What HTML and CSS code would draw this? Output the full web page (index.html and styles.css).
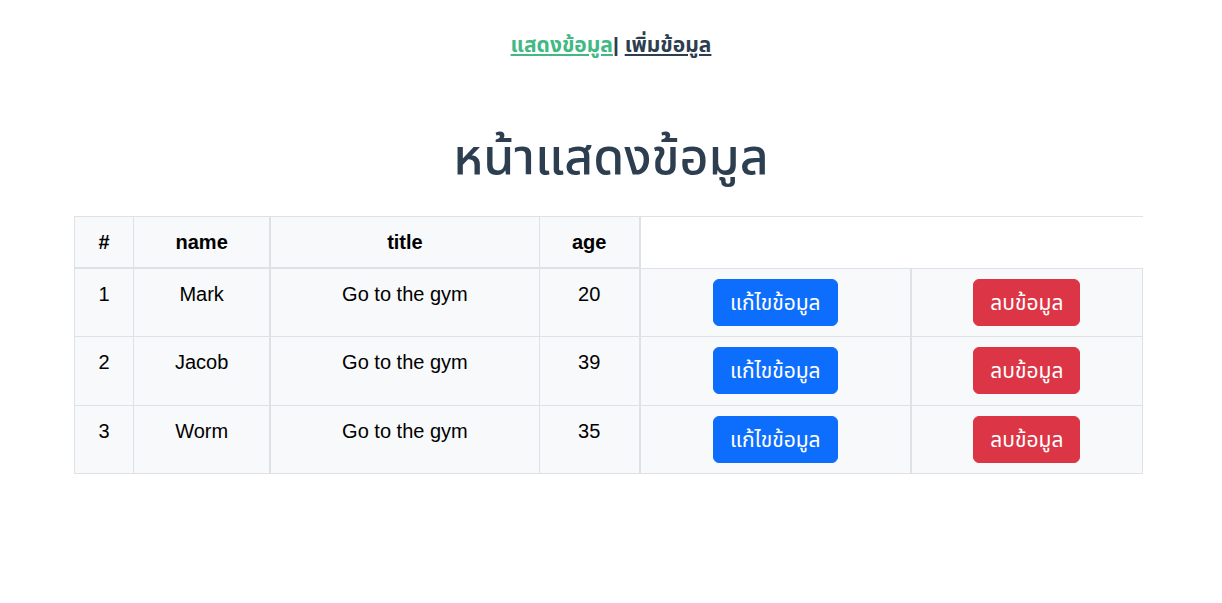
FILE: index.html
```html
<!DOCTYPE html>
<html lang="th">
<head>
<meta charset="utf-8">
<title>หน้าแสดงข้อมูล</title>
<link rel="stylesheet" href="styles.css">
</head>
<body>
<div class="app">
  <nav class="nav">
    <a href="#" class="link active">แสดงข้อมูล</a>| <a href="#" class="link">เพิ่มข้อมูล</a>
  </nav>
  <h1 class="title">หน้าแสดงข้อมูล</h1>
  <table class="data-table">
    <thead>
      <tr>
        <th class="c-num">#</th>
        <th class="c-name">name</th>
        <th class="c-title">title</th>
        <th class="c-age">age</th>
      </tr>
    </thead>
    <tbody>
      <tr>
        <td class="c-num">1</td>
        <td class="c-name">Mark</td>
        <td class="c-title">Go to the gym</td>
        <td class="c-age">20</td>
        <td class="c-edit"><button class="btn btn-edit">แก้ไขข้อมูล</button></td>
        <td class="c-del"><button class="btn btn-del">ลบข้อมูล</button></td>
      </tr>
      <tr>
        <td class="c-num">2</td>
        <td class="c-name">Jacob</td>
        <td class="c-title">Go to the gym</td>
        <td class="c-age">39</td>
        <td class="c-edit"><button class="btn btn-edit">แก้ไขข้อมูล</button></td>
        <td class="c-del"><button class="btn btn-del">ลบข้อมูล</button></td>
      </tr>
      <tr>
        <td class="c-num">3</td>
        <td class="c-name">Worm</td>
        <td class="c-title">Go to the gym</td>
        <td class="c-age">35</td>
        <td class="c-edit"><button class="btn btn-edit">แก้ไขข้อมูล</button></td>
        <td class="c-del"><button class="btn btn-del">ลบข้อมูล</button></td>
      </tr>
    </tbody>
  </table>
</div>
</body>
</html>
```
FILE: styles.css
```css
* { box-sizing: border-box; }
body {
  margin: 0;
  background: #fff;
  font-family: "Liberation Sans", Arial, "Noto Sans Thai", "Noto Sans", sans-serif;
  color: #212529;
}
.app {
  text-align: center;
  color: #2c3e50;
}
.nav {
  padding: 30px;
  font-size: 21px;
  line-height: 30px;
  font-weight: bold;
}
.link { color: #2c3e50; }
.link.active { color: #42b983; }
.title {
  margin: 38px 0 30px;
  font-size: 50px;
  line-height: 58px;
  font-weight: 500;
}
.data-table {
  width: 1069px;
  margin-left: 74px;
  border-collapse: collapse;
  font-size: 20px;
  line-height: 30px;
  color: #000;
}
.data-table thead tr { border-top: 1px solid #dee2e6; }
.data-table th {
  background: #f8f9fa;
  border: 1px solid #dee2e6;
  border-top: 0;
  border-bottom: 2px solid #dee2e6;
  padding: 10px 8px;
  font-weight: bold;
  vertical-align: middle;
}
.data-table td {
  background: #f8f9fa;
  border: 1px solid #dee2e6;
  padding: 10px 8px 10.5px;
  vertical-align: top;
}
.c-num { width: 59px; }
.c-name { width: 137px; }
.c-title { width: 269px; border-left-width: 2px !important; }
.c-age { width: 101px; }
.data-table th.c-age { border-right-width: 2px; }
.c-edit { width: 271px; border-left-width: 2px !important; }
.c-del { width: 232px; border-left-width: 2px !important; }
.btn {
  font-family: inherit;
  font-size: 21px;
  line-height: 29px;
  padding: 8px 16px;
  border-radius: 6px;
  color: #fff;
  cursor: pointer;
}
.btn-edit { background: #0d6efd; border: 1px solid #0d6efd; }
.btn-del { background: #dc3545; border: 1px solid #dc3545; }
```
